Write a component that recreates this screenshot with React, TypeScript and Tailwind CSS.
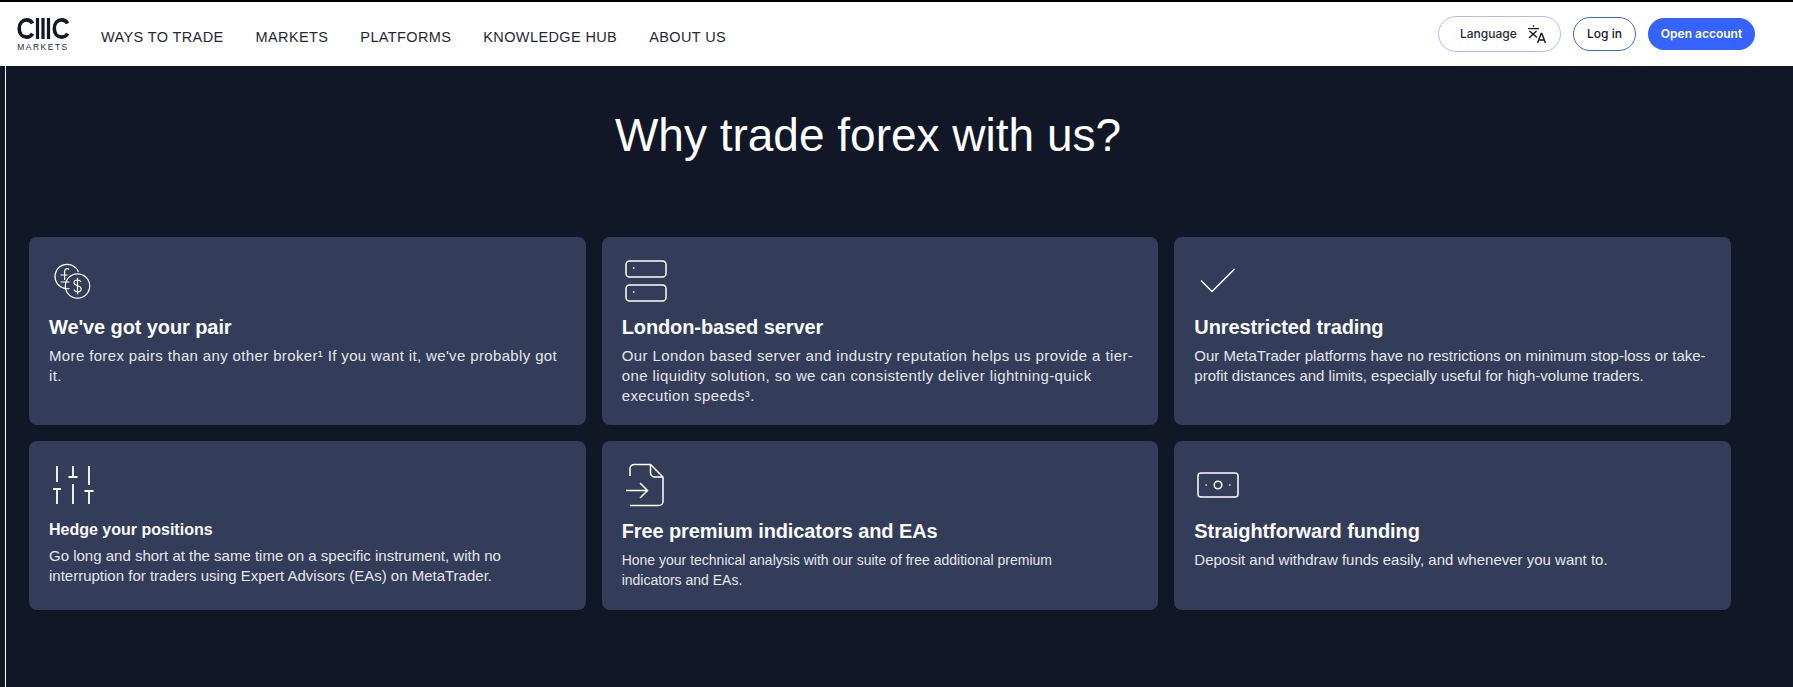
import type { ReactNode } from "react";

const navLinks = ["WAYS TO TRADE", "MARKETS", "PLATFORMS", "KNOWLEDGE HUB", "ABOUT US"];

function Logo() {
    return (
        <div className="flex w-[52px] flex-col items-stretch">
            <svg width="52" height="21" viewBox="0 0 52 21" fill="none" stroke="#111827">
                <path d="M15.5 5.4C14.2 3 12.2 1.9 9.6 1.9 5.4 1.9 2.2 5.2 2.2 10.5s3.2 8.6 7.4 8.6c2.6 0 4.6-1.1 5.9-3.5" strokeWidth="3.6" />
                <path d="M20.5 0v21M26 0v21M31.5 0v21" strokeWidth="3.2" />
                <path d="M50.6 5.4C49.3 3 47.3 1.9 44.7 1.9c-4.2 0-7.4 3.3-7.4 8.6s3.2 8.6 7.4 8.6c2.6 0 4.6-1.1 5.9-3.5" strokeWidth="3.6" />
            </svg>
            <span className="mt-1 text-center text-[8.5px] leading-[8px] tracking-[1.5px] text-[#1f2937]">MARKETS</span>
        </div>
    );
}

function LanguageIcon() {
    return (
        <svg width="20" height="20" viewBox="0 0 20 20" fill="none" stroke="#111827" strokeWidth="1.4">
            <path d="M1 4.6h11M6.5 1.2v1.6M2.5 7l7.5 6.5M9.5 7L2 14" />
            <path d="M10.5 19l3.7-9.5h.6l3.7 9.5M11.8 16h5.4" />
        </svg>
    );
}

function CoinsIcon() {
    return (
        <svg width="40" height="40" viewBox="0 0 40 40" fill="none" stroke="white" strokeWidth="1.2">
            <path d="M17.5 27.5A12.2 12.2 0 1 1 26.5 11" />
            <circle cx="25.5" cy="25" r="12.2" />
            <path d="M17 8.5c-1.5-1.6-4.4-.8-4.4 2v8.5M8.5 14h7M8.5 21h9" />
            <path d="M29 21c-.7-1.4-2-2-3.6-2-2 0-3.4 1-3.4 2.8 0 3.8 7.2 2 7.2 6 0 1.9-1.5 3-3.6 3-1.8 0-3.1-.8-3.8-2.2M25.5 16.8v16.4" />
        </svg>
    );
}

function ServerIcon() {
    return (
        <svg width="42" height="42" viewBox="0 0 42 42" fill="none" stroke="white" strokeWidth="1.5">
            <rect x="1" y="1" width="40" height="16" rx="3.5" />
            <rect x="1" y="25" width="40" height="16" rx="3.5" />
            <path d="M8 8h1.5M8 32h1.5" />
        </svg>
    );
}

function CheckIcon() {
    return (
        <svg className="ml-[3px]" width="36" height="26" viewBox="0 0 36 26" fill="none" stroke="white" strokeWidth="1.4">
            <path d="M1 12.5L12 23.5 34.5 1" />
        </svg>
    );
}

function SlidersIcon() {
    return (
        <svg width="42" height="40" viewBox="0 0 42 40" fill="none" stroke="white" strokeWidth="1.8">
            <path d="M5 1v16M21 1v11M16.5 12h9M37 1v19" />
            <path d="M1 24h8M5 24v15M21 19v20M32.5 26h9M37 26v13" />
        </svg>
    );
}

function FileIcon() {
    return (
        <svg width="40" height="44" viewBox="0 0 40 44" fill="none" stroke="white" strokeWidth="1.5">
            <path d="M5 13V5.5A4 4 0 0 1 9 1.5h16.5L38 14v24.5a4 4 0 0 1-4 4H5" />
            <path d="M25.5 1.5V9.5a4.5 4.5 0 0 0 4.5 4.5h8" />
            <path d="M1 27.5h21M15 20l7.5 7.5L15 35" />
        </svg>
    );
}

function CashIcon() {
    return (
        <svg width="42" height="26" viewBox="0 0 42 26" fill="none" stroke="white" strokeWidth="1.5">
            <rect x="1" y="1" width="40" height="24" rx="3" />
            <circle cx="21" cy="13" r="3.8" />
            <path d="M8.5 13h1.3M32.2 13h1.3" />
        </svg>
    );
}

interface Feature {
    icon: ReactNode;
    title: string;
    body: string;
    bodyClass: string;
    small?: boolean;
}

const features: Feature[] = [
    {
        icon: <CoinsIcon />,
        title: "We've got your pair",
        body: "More forex pairs than any other broker¹ If you want it, we've probably got it.",
        bodyClass: "text-[15px] tracking-[0.36px]",
    },
    {
        icon: <ServerIcon />,
        title: "London-based server",
        body: "Our London based server and industry reputation helps us provide a tier-one liquidity solution, so we can consistently deliver lightning-quick execution speeds³.",
        bodyClass: "text-[15px] tracking-[0.4px]",
    },
    {
        icon: <CheckIcon />,
        title: "Unrestricted trading",
        body: "Our MetaTrader platforms have no restrictions on minimum stop-loss or take-profit distances and limits, especially useful for high-volume traders.",
        bodyClass: "text-[15px]",
    },
    {
        icon: <SlidersIcon />,
        title: "Hedge your positions",
        body: "Go long and short at the same time on a specific instrument, with no interruption for traders using Expert Advisors (EAs) on MetaTrader.",
        bodyClass: "max-w-[480px] text-[15px]",
        small: true,
    },
    {
        icon: <FileIcon />,
        title: "Free premium indicators and EAs",
        body: "Hone your technical analysis with our suite of free additional premium indicators and EAs.",
        bodyClass: "max-w-[490px] text-[14px]",
    },
    {
        icon: <CashIcon />,
        title: "Straightforward funding",
        body: "Deposit and withdraw funds easily, and whenever you want to.",
        bodyClass: "text-[15px]",
    },
];

function FeatureCard({ feature }: { feature: Feature }) {
    return (
        <div className="rounded-lg bg-[#333c59] px-5 pt-5">
            <div className="flex h-12 items-center pl-[3px]">{feature.icon}</div>
            {feature.small ? (
                <h3 className="mt-[9px] mb-1 text-[16px] leading-6 font-bold text-[#f9fafb]">{feature.title}</h3>
            ) : (
                <h3 className="mt-2 mb-[5px] text-[20px] leading-7 font-bold tracking-[-0.1px] text-[#f9fafb]">{feature.title}</h3>
            )}
            <p className={`leading-5 text-[#e5e7eb] ${feature.bodyClass}`}>{feature.body}</p>
        </div>
    );
}

export default function App() {
    return (
        <div className="flex h-[687px] flex-col overflow-hidden bg-[#111727] font-['Liberation_Sans',sans-serif]">
            <header className="flex h-[66px] shrink-0 items-center border-t-2 border-black bg-white pr-[38px] pl-[17px]">
                <Logo />
                <nav className="mt-2 ml-8 flex items-center gap-8">
                    {navLinks.map(link => (
                        <a key={link} className="text-[14.5px] tracking-[0.38px] text-[#1f2937]">
                            {link}
                        </a>
                    ))}
                </nav>
                <div className="ml-auto flex items-center gap-3 font-['Inter',sans-serif] text-[12px] font-medium">
                    <button className="flex h-9 w-[123px] items-center justify-between rounded-full border border-[#a9bfff] pr-[13px] pl-[21px] text-[#1f2937]">
                        Language
                        <LanguageIcon />
                    </button>
                    <button className="h-[34px] w-[63px] rounded-full border border-[#3563ff] text-[#111827]">Log in</button>
                    <button className="h-8 w-[107px] rounded-full bg-[#3563ff] font-semibold text-white">Open account</button>
                </div>
            </header>
            <div className="ml-[5px] flex-1 border-l border-white pl-[23px]">
                <h2 className="mt-[39px] w-[1678px] text-center text-[46px] leading-[60px] text-white">Why trade forex with us?</h2>
                <div className="mt-[72px] grid w-[1702px] grid-cols-3 grid-rows-[188px_169px] gap-4">
                    {features.map(feature => (
                        <FeatureCard key={feature.title} feature={feature} />
                    ))}
                </div>
            </div>
        </div>
    );
}
